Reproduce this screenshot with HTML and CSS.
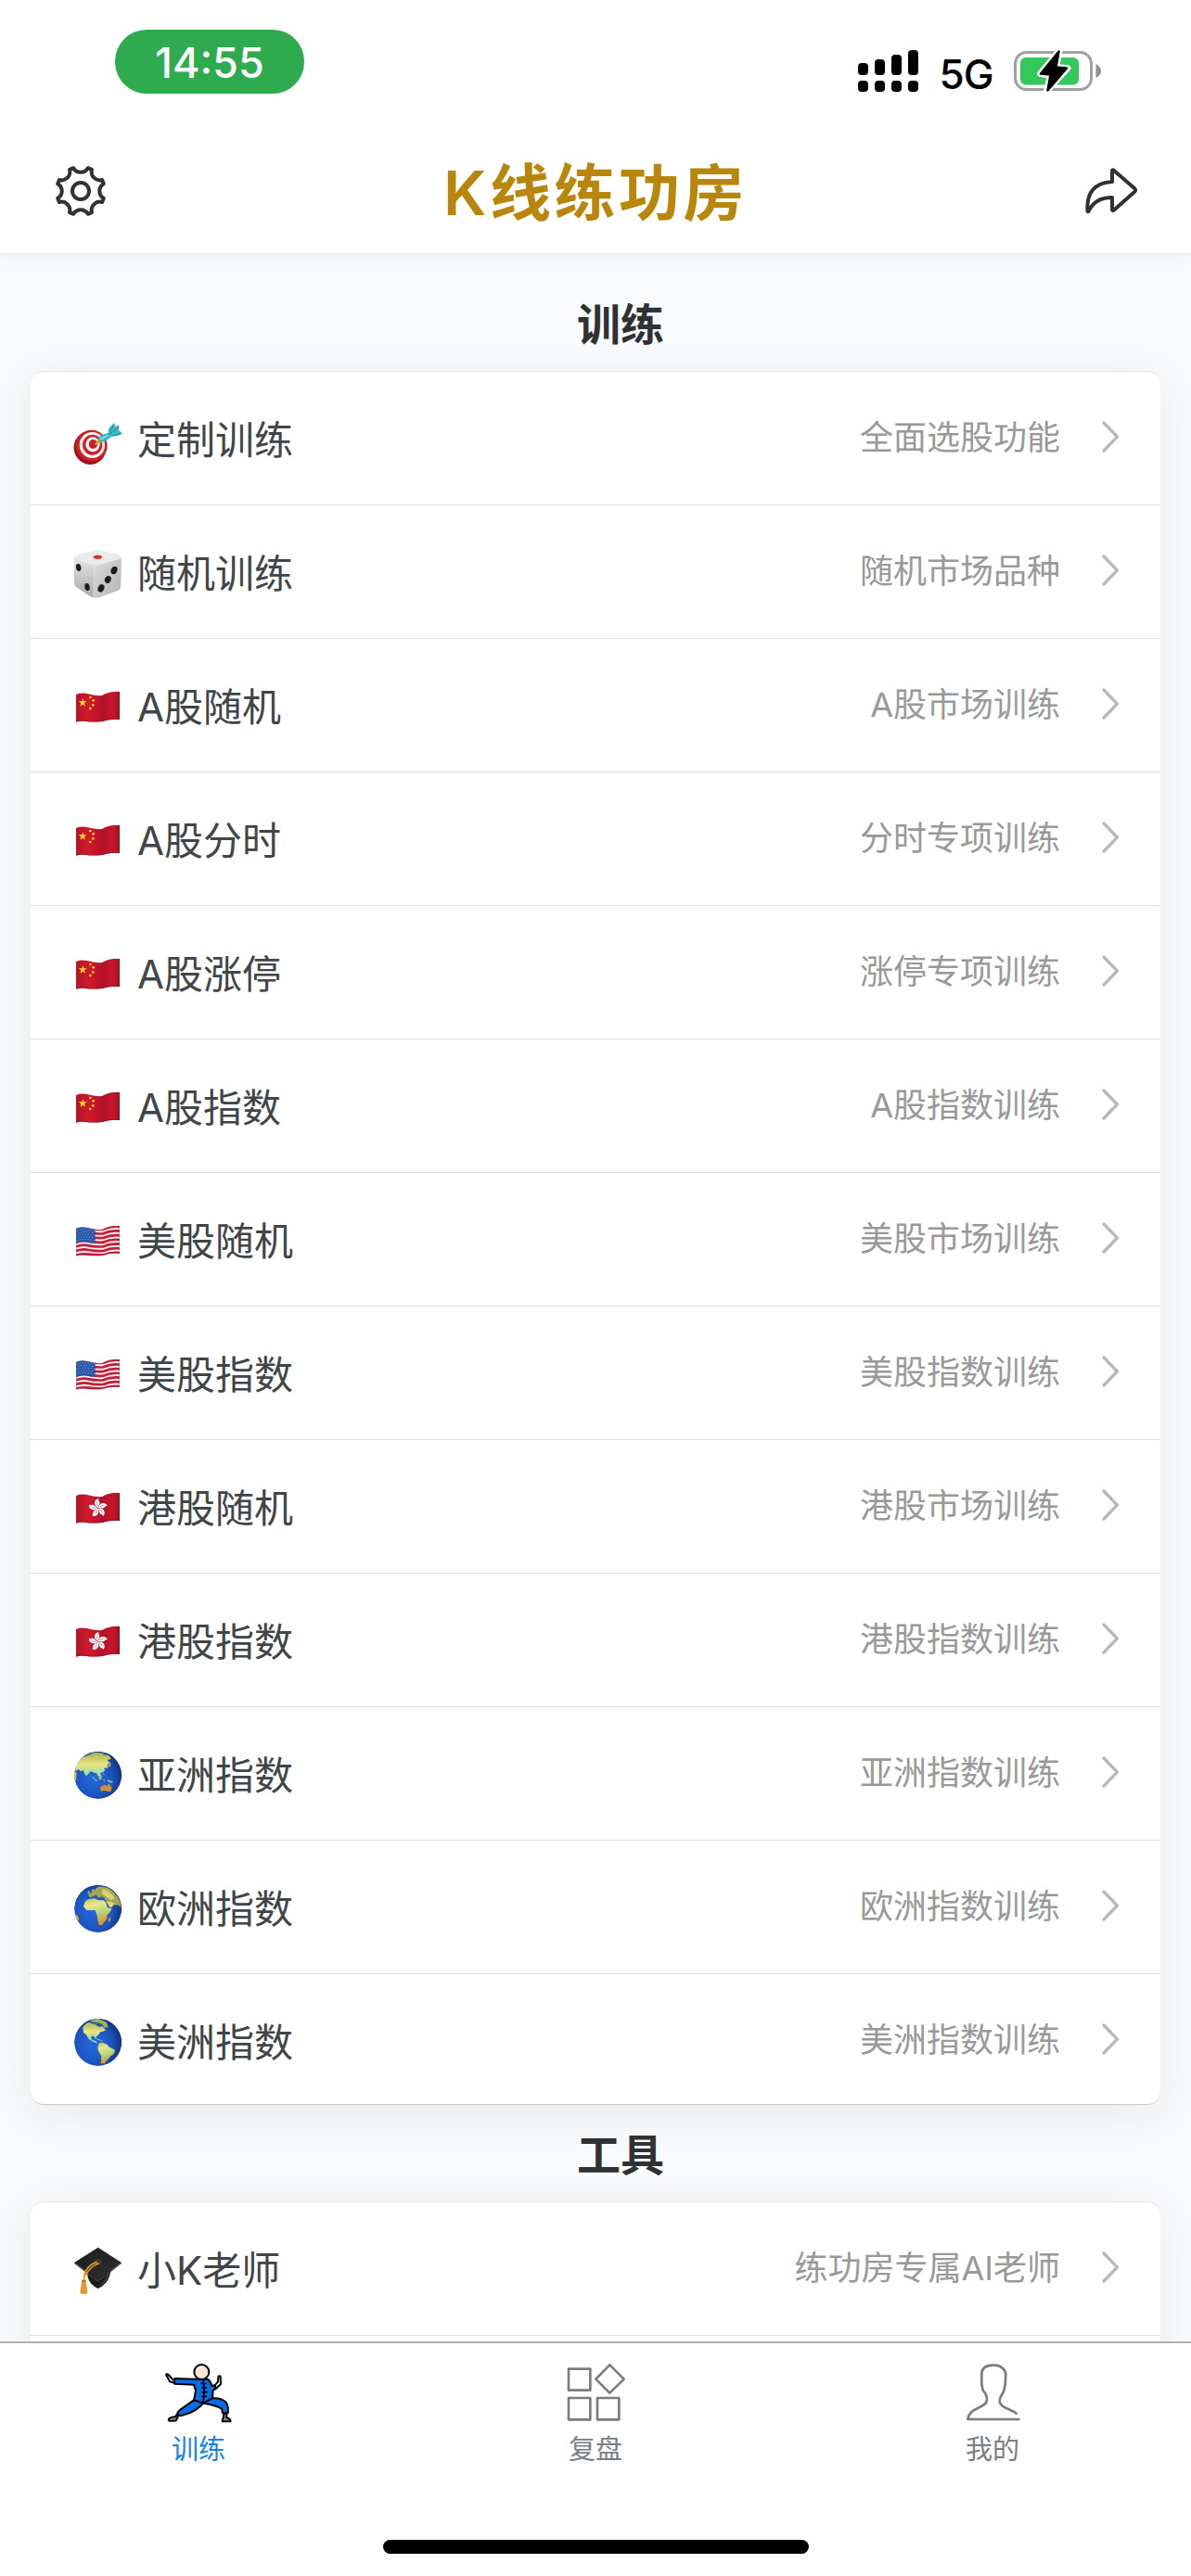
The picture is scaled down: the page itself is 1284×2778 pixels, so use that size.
FILE: index.html
```
<!DOCTYPE html>
<html lang="zh-CN">
<head>
    <meta charset="UTF-8">
    <meta name="viewport" content="width=device-width, initial-scale=1.0">
    <title>K线练功房</title>
    <link rel="stylesheet" href="styles.css">
</head>
<body>
    <!-- Shared icons -->
    <svg class="sprite" width="0" height="0" aria-hidden="true">
        <defs>
            <linearGradient id="diceLeft" x1="0" y1="0" x2="0" y2="1">
                <stop offset="0" stop-color="#e4e4e4"/>
                <stop offset="1" stop-color="#a9a9a9"/>
            </linearGradient>
            <linearGradient id="diceRight" x1="0" y1="0" x2="1" y2="1">
                <stop offset="0" stop-color="#dcdcdc"/>
                <stop offset="1" stop-color="#b4b4b4"/>
            </linearGradient>
            <linearGradient id="flagRed" x1="0" y1="0" x2="1" y2="0">
                <stop offset="0" stop-color="#b41526"/>
                <stop offset="0.3" stop-color="#d0182c"/>
                <stop offset="0.6" stop-color="#b31229"/>
                <stop offset="0.85" stop-color="#c8162b"/>
                <stop offset="1" stop-color="#9c1222"/>
            </linearGradient>
            <radialGradient id="sea" cx="0.4" cy="0.55" r="0.62">
                <stop offset="0" stop-color="#2468dc"/>
                <stop offset="0.65" stop-color="#1c53c0"/>
                <stop offset="1" stop-color="#123178"/>
            </radialGradient>
            <linearGradient id="land" x1="0" y1="0" x2="0.3" y2="1">
                <stop offset="0" stop-color="#b9c248"/>
                <stop offset="0.3" stop-color="#ece48a"/>
                <stop offset="0.6" stop-color="#b5dc84"/>
                <stop offset="1" stop-color="#d9972c"/>
            </linearGradient>
            <linearGradient id="asiaLand" x1="0" y1="0" x2="0" y2="1">
                <stop offset="0" stop-color="#a9b545"/>
                <stop offset="0.45" stop-color="#ebe282"/>
                <stop offset="0.7" stop-color="#b4e0a0"/>
                <stop offset="1" stop-color="#9adcb4"/>
            </linearGradient>
            <linearGradient id="board" x1="0" y1="0" x2="1" y2="1">
                <stop offset="0" stop-color="#1c1c1c"/>
                <stop offset="0.7" stop-color="#2a2a2a"/>
                <stop offset="1" stop-color="#0c0c0c"/>
            </linearGradient>
            <clipPath id="globeClip"><circle cx="77" cy="77" r="77"/></clipPath>
            <clipPath id="flagClip"><path d="M0 12Q16 5 36 9Q60 17 84 15Q112 0 141 3V93Q112 90 84 99Q52 103 30 98Q14 96 0 101Z"/></clipPath>
        </defs>

        <symbol id="i-target" viewBox="174 174 162 162">
            <ellipse cx="231" cy="279" rx="52" ry="54" fill="#96121a" transform="rotate(-20 231 279)"/>
            <ellipse cx="236" cy="272" rx="51" ry="51" fill="#cf1d26"/>
            <ellipse cx="238" cy="270" rx="41" ry="42" fill="#fbf5f4"/>
            <ellipse cx="239" cy="269" rx="32" ry="33" fill="#cb1f29"/>
            <ellipse cx="240" cy="268" rx="23" ry="24" fill="#fbf5f4"/>
            <ellipse cx="241" cy="267" rx="14" ry="15" fill="#c71e27"/>
            <path d="M244 270L258 250L270 262Z" fill="#d9a51f"/>
            <path d="M258 247Q278 230 292 232L300 242Q288 254 266 262Q258 256 258 247Z" fill="#34b5c6"/>
            <path d="M288 236L293 214L310 197L312 210L325 205L324 222L336 232L322 239L298 243Z" fill="#3dbac8"/>
            <path d="M290 237L324 212M294 226L310 204M302 240L332 233" fill="none" stroke="#1b8796" stroke-width="3"/>
            <path d="M264 252L290 238" stroke="#8be3ec" stroke-width="5"/>
        </symbol>

        <symbol id="i-dice" viewBox="174 606 162 162">
            <path d="M179 641Q179 632 192 626L244 612Q258 609 272 613L320 624Q333 629 333 642L330 728Q329 737 318 742L262 762Q249 766 238 762L192 733Q181 727 180 718Z" fill="#dedede"/>
            <path d="M180 638Q190 640 226 655Q242 661 243 676L241 762Q236 763 230 758L192 733Q181 727 180 718Z" fill="url(#diceLeft)"/>
            <path d="M333 638Q320 640 272 655Q246 661 245 680L243 763Q252 765 262 762L318 742Q329 737 330 728Z" fill="url(#diceRight)"/>
            <path d="M181 637Q184 629 200 624L244 612Q258 609 272 613L320 624Q330 628 331 637Q300 646 270 654Q245 662 226 654Z" fill="#ebebeb"/>
            <ellipse cx="256" cy="632" rx="14" ry="6" fill="#e02a26"/>
            <g fill="#1d1d1d">
                <ellipse cx="194" cy="666" rx="8" ry="12" transform="rotate(-12 194 666)"/>
                <ellipse cx="222" cy="729" rx="8" ry="12" transform="rotate(-12 222 729)"/>
                <ellipse cx="309" cy="675" rx="10" ry="13" transform="rotate(25 309 675)"/>
                <ellipse cx="289" cy="705" rx="10" ry="12" transform="rotate(25 289 705)"/>
                <ellipse cx="267" cy="733" rx="10" ry="13" transform="rotate(25 267 733)"/>
            </g>
        </symbol>

        <symbol id="i-cn" viewBox="-12 -27 162 162">
            <g clip-path="url(#flagClip)">
                <rect width="141" height="104" fill="url(#flagRed)"/>
                <path d="M0 101Q14 96 30 98Q52 103 84 99Q112 90 141 93V3" fill="none" stroke="#7e1520" stroke-width="4"/>
                <g fill="#fbdc22">
                    <path d="M22 24L25 34L35 34L27 40L30 50L22 44L13 50L16 40L8 34L19 34Z"/>
                    <circle cx="46" cy="21" r="4"/>
                    <circle cx="56" cy="31" r="4"/>
                    <circle cx="55" cy="46" r="4"/>
                    <circle cx="46" cy="57" r="4"/>
                </g>
            </g>
        </symbol>

        <symbol id="i-us" viewBox="-12 -27 162 162">
            <g clip-path="url(#flagClip)">
                <rect width="141" height="104" fill="#f3f0f1"/>
                <g fill="none" stroke="#c81c36" stroke-width="8">
                    <path d="M0 14Q20 6 42 11T88 14Q112 3 141 6"/>
                    <path d="M0 28Q20 20 42 25T88 28Q112 17 141 20"/>
                    <path d="M0 42Q20 34 42 39T88 42Q112 31 141 34"/>
                    <path d="M0 56Q20 48 42 53T88 56Q112 45 141 48"/>
                    <path d="M0 70Q20 62 42 67T88 70Q112 59 141 62"/>
                    <path d="M0 84Q20 76 42 81T88 84Q112 73 141 76"/>
                    <path d="M0 98Q20 92 42 95T88 97Q112 87 141 90"/>
                </g>
                <path d="M0 0H62V58Q50 60 38 56Q18 52 0 60Z" fill="#2456a8"/>
                <g fill="none" stroke="#a8c0e6" stroke-width="3" stroke-dasharray="3 6">
                    <path d="M4 19Q20 10 60 18"/>
                    <path d="M8 27Q22 18 60 26"/>
                    <path d="M4 35Q20 26 60 34"/>
                    <path d="M8 43Q22 34 60 42"/>
                    <path d="M4 51Q20 42 60 50"/>
                </g>
                <path d="M0 101Q14 96 30 98Q52 103 84 99Q112 90 141 93V3M0 12V101" fill="none" stroke="#6d5560" stroke-opacity="0.6" stroke-width="3"/>
            </g>
        </symbol>

        <symbol id="i-hk" viewBox="-12 -27 162 162">
            <g clip-path="url(#flagClip)">
                <rect width="141" height="104" fill="url(#flagRed)"/>
                <path d="M0 101Q14 96 30 98Q52 103 84 99Q112 90 141 93V3" fill="none" stroke="#7e1520" stroke-width="4"/>
                <!-- Bauhinia, five rotated petals -->
                <g transform="translate(71 52)">
                    <path id="petal" d="M0 -1C-6 -5 -14 -12 -10 -21C-8 -27 -4 -30 3 -31C-1 -26 4 -24 5 -18C6 -11 1 -9 0 -1Z" fill="#fff"/>
                    <use href="#petal" transform="rotate(72)"/>
                    <use href="#petal" transform="rotate(144)"/>
                    <use href="#petal" transform="rotate(216)"/>
                    <use href="#petal" transform="rotate(288)"/>
                    <g fill="none" stroke="#d3182c" stroke-width="1.6">
                        <path id="vein" d="M-1 -7Q-5 -12 -3 -19"/>
                        <use href="#vein" transform="rotate(72)"/>
                        <use href="#vein" transform="rotate(144)"/>
                        <use href="#vein" transform="rotate(216)"/>
                        <use href="#vein" transform="rotate(288)"/>
                    </g>
                </g>
            </g>
        </symbol>

        <symbol id="i-asia" viewBox="-6 -2 162 162">
            <g clip-path="url(#globeClip)">
                <circle cx="77" cy="77" r="77" fill="url(#sea)"/>
                <path d="M2 54Q16 20 52 8Q84 -2 112 14L120 24L108 28L114 38L106 46L108 54L96 54L100 62L92 68L84 70L88 82L82 80L84 88L76 78L72 70L66 70L54 64L46 72L40 80L34 74L30 62L20 64L14 58L6 64Z" fill="url(#asiaLand)"/>
                <path d="M24 12L50 4L58 10L34 18ZM90 4L108 12L96 14Z" fill="#4c78a0"/>
                <path d="M0 60L8 70L6 92L0 98Z" fill="#d8bb3c"/>
                <path d="M116 32L119 46L108 52L104 48L113 44Z" fill="#b9b553"/>
                <path d="M60 82L76 96L72 98L58 84ZM80 82L90 78L88 92L80 92ZM76 99L92 101M94 88L100 92L96 98ZM108 92L126 98L120 102L106 96ZM94 66L98 78L94 75Z" fill="#8ac58a"/>
                <path d="M84 116L98 108L106 112L112 104L122 118L118 130L106 130L98 126L86 130Z" fill="#cf9134"/>
            </g>
        </symbol>

        <symbol id="i-europe" viewBox="-6 -2 162 162">
            <g clip-path="url(#globeClip)">
                <circle cx="77" cy="77" r="77" fill="url(#sea)"/>
                <path d="M46 36L48 28L56 26L58 12L66 16L76 6Q110 2 128 24Q150 46 152 74L140 64L132 66L122 58L114 62L108 52L98 50L100 44L88 38L80 42L70 32L62 38L52 40Z" fill="#a6a650"/>
                <path d="M92 14Q116 18 132 44L118 48L100 36L90 28Z" fill="#dcd27a"/>
                <path d="M34 56Q38 48 48 46L66 44L78 50L94 50L102 56L108 74L122 76Q116 92 106 98L106 110L96 122L90 130L80 130L76 114L74 100L68 82L54 82L40 82L30 70Z" fill="url(#land)"/>
                <path d="M100 52L108 58L118 72L112 74Z" fill="#2059c3"/>
                <path d="M102 52L116 54L130 60L124 70L116 74Z" fill="#e3d67c"/>
                <path d="M112 108L118 104L116 118L110 120ZM0 94L10 98L16 110L8 124L0 110Z" fill="#cfa434"/>
                <path d="M44 22L50 18L50 28L44 30Z" fill="#a8bd54"/>
            </g>
        </symbol>

        <symbol id="i-america" viewBox="-6 -2 162 162">
            <g clip-path="url(#globeClip)">
                <circle cx="77" cy="77" r="77" fill="url(#sea)"/>
                <path d="M28 30Q34 16 48 12L60 18L74 16L82 26L90 24L102 38L94 42L84 44L80 52L72 58L70 64L60 56L54 62L58 70L70 74L76 80L70 80L58 74L46 66L40 54L30 46Z" fill="url(#asiaLand)"/>
                <path d="M50 8L76 0L104 12L110 28L98 30L90 18L76 14L62 12Z" fill="#9cb552"/>
                <path d="M64 16L84 18L88 28L76 26Z" fill="#2059b4"/>
                <path d="M80 80L92 78L106 84L112 92L132 102Q130 116 118 122L106 136L98 146L86 146L88 122L78 106L76 94Z" fill="url(#land)"/>
                <path d="M66 64L84 70L92 74" fill="none" stroke="#8ac58a" stroke-width="3"/>
            </g>
        </symbol>

        <symbol id="i-cap" viewBox="54 66 162 162">
            <path d="M101 145L104 168Q112 194 137 204Q166 190 174 164L181 140Z" fill="#1b1b1b"/>
            <path d="M146 192Q164 180 172 152" fill="none" stroke="#3d3d3d" stroke-width="5"/>
            <path d="M137 71L213 120L137 178L60 120Z" fill="url(#board)"/>
            <path d="M60 120L137 178L213 120V123L137 182L60 123Z" fill="#404040"/>
            <ellipse cx="137" cy="118" rx="13" ry="9" fill="#3b3b3e"/>
            <path d="M134 118Q104 126 92 160V180M140 122Q112 132 94 164" fill="none" stroke="#e09a26" stroke-width="5"/>
            <path d="M85 176H97L103 216Q103 222 91 222Q79 222 79 216Z" fill="#e39c28"/>
            <path d="M85 176H97V182H84Z" fill="#b97415"/>
        </symbol>

        <symbol id="i-arrow" viewBox="0 0 18 34">
            <path d="M2 2L16.500 17L2 32" fill="none" stroke="#b8b8b8" stroke-width="3.300" stroke-linecap="round"/>
        </symbol>
    </svg>

    <div class="app">
        <div class="status-bar">
            <div class="time">14:55</div>
            <div class="status-icons">
                <svg class="signal" width="66" height="46" viewBox="925 53 66 46">
                    <rect x="925" y="67" width="11" height="13" rx="4"/>
                    <rect x="943" y="63" width="11" height="17" rx="4"/>
                    <rect x="961" y="58" width="11" height="22" rx="4"/>
                    <rect x="979" y="53" width="11" height="27" rx="4"/>
                    <rect x="925" y="86" width="11" height="12" rx="4"/>
                    <rect x="943" y="86" width="11" height="12" rx="4"/>
                    <rect x="961" y="86" width="11" height="12" rx="4"/>
                    <rect x="979" y="86" width="11" height="12" rx="4"/>
                </svg>
                <span class="network">5G</span>
                <svg class="battery" width="96" height="48" viewBox="1092 52 96 48">
                    <rect x="1094.500" y="55.500" width="82" height="40" rx="12" fill="none" stroke="#a0a0a0" stroke-width="3"/>
                    <path d="M1181.500 68Q1187 71 1187 76Q1187 80 1181.500 83Z" fill="#8f8f8f"/>
                    <rect x="1100" y="61" width="63" height="29.500" rx="6" fill="#34c759"/>
                    <path d="M1142 54L1121.500 78.500L1132.500 80L1128.500 97L1151 72.500L1138.500 71.500Z" stroke="#fff" stroke-width="7" stroke-linejoin="round" fill="#fff"/>
                    <path d="M1141.500 54.500L1122 78.500L1132.500 79.500L1129.500 96.500L1150 72.500L1138.500 71.500Z" stroke="#000" stroke-width="2.500" stroke-linejoin="round"/>
                </svg>
            </div>
        </div>

        <header class="nav">
            <svg class="gear" width="56" height="56" viewBox="-28 -28 56 56">
                <path d="M-7.800 -24.800A9 9 0 0 0 7.800 -24.800L12 -23.100A9 9 0 0 0 23.100 -12L24.800 -7.800A9 9 0 0 0 24.800 7.800L23.100 12A9 9 0 0 0 12 23.100L7.800 24.800A9 9 0 0 0 -7.800 24.800L-12 23.100A9 9 0 0 0 -23.100 12L-24.800 7.800A9 9 0 0 0 -24.800 -7.800L-23.100 -12A9 9 0 0 0 -12 -23.100Z"/>
                <circle r="9"/>
            </svg>
            <h1>K线练功房</h1>
            <svg class="share" width="58" height="50" viewBox="1170 180 58 50">
                <path d="M1173.500 226.500C1172 207 1181 196 1200 195V183Q1200.500 181.500 1202 183L1224 202Q1226 204 1224 206L1202 225.500Q1200 227 1200 225V212C1188 212 1180 216 1175 226Q1174 228 1173.500 226.500Z"/>
            </svg>
        </header>

        <main class="content">
            <h2>训练</h2>
            <ul class="card">
                <li><svg class="icon"><use href="#i-target"/></svg><span class="name">定制训练</span><span class="desc">全面选股功能</span><svg class="arrow"><use href="#i-arrow"/></svg></li>
                <li><svg class="icon"><use href="#i-dice"/></svg><span class="name">随机训练</span><span class="desc">随机市场品种</span><svg class="arrow"><use href="#i-arrow"/></svg></li>
                <li><svg class="icon"><use href="#i-cn"/></svg><span class="name">A股随机</span><span class="desc">A股市场训练</span><svg class="arrow"><use href="#i-arrow"/></svg></li>
                <li><svg class="icon"><use href="#i-cn"/></svg><span class="name">A股分时</span><span class="desc">分时专项训练</span><svg class="arrow"><use href="#i-arrow"/></svg></li>
                <li><svg class="icon"><use href="#i-cn"/></svg><span class="name">A股涨停</span><span class="desc">涨停专项训练</span><svg class="arrow"><use href="#i-arrow"/></svg></li>
                <li><svg class="icon"><use href="#i-cn"/></svg><span class="name">A股指数</span><span class="desc">A股指数训练</span><svg class="arrow"><use href="#i-arrow"/></svg></li>
                <li><svg class="icon"><use href="#i-us"/></svg><span class="name">美股随机</span><span class="desc">美股市场训练</span><svg class="arrow"><use href="#i-arrow"/></svg></li>
                <li><svg class="icon"><use href="#i-us"/></svg><span class="name">美股指数</span><span class="desc">美股指数训练</span><svg class="arrow"><use href="#i-arrow"/></svg></li>
                <li><svg class="icon"><use href="#i-hk"/></svg><span class="name">港股随机</span><span class="desc">港股市场训练</span><svg class="arrow"><use href="#i-arrow"/></svg></li>
                <li><svg class="icon"><use href="#i-hk"/></svg><span class="name">港股指数</span><span class="desc">港股指数训练</span><svg class="arrow"><use href="#i-arrow"/></svg></li>
                <li><svg class="icon"><use href="#i-asia"/></svg><span class="name">亚洲指数</span><span class="desc">亚洲指数训练</span><svg class="arrow"><use href="#i-arrow"/></svg></li>
                <li><svg class="icon"><use href="#i-europe"/></svg><span class="name">欧洲指数</span><span class="desc">欧洲指数训练</span><svg class="arrow"><use href="#i-arrow"/></svg></li>
                <li><svg class="icon"><use href="#i-america"/></svg><span class="name">美洲指数</span><span class="desc">美洲指数训练</span><svg class="arrow"><use href="#i-arrow"/></svg></li>
            </ul>

            <h2>工具</h2>
            <ul class="card card-open">
                <li><svg class="icon"><use href="#i-cap"/></svg><span class="name">小K老师</span><span class="desc">练功房专属AI老师</span><svg class="arrow"><use href="#i-arrow"/></svg></li>
            </ul>
        </main>

        <nav class="tab-bar">
            <div class="tab active">
                <svg width="74" height="66" viewBox="82 115 222 198" stroke="#000" stroke-width="6" stroke-linejoin="round" stroke-linecap="round">
                    <path d="M181 168L116 166L115 183L178 186L184 206L178 236L208 246L238 232L240 204L248 200L246 188L236 190Q232 174 222 168Z" fill="#0a6ce8"/>
                    <path d="M178 236L135 266Q122 276 126 284Q132 290 150 282Q188 272 208 246Z" fill="#0a6ce8"/>
                    <path d="M208 246L238 230Q270 228 284 246Q290 256 288 278H271L268 264Q250 252 208 246Z" fill="#0a6ce8"/>
                    <circle cx="203" cy="145" r="24" fill="#fbe3d6"/>
                    <path d="M114 180L100 176Q94 164 88 154Q90 150 96 154L110 170" fill="#fff"/>
                    <path d="M246 188L256 176L257 160Q261 156 264 160L265 184L250 198Z" fill="#fff"/>
                    <path d="M124 281L118 290Q96 292 96 300Q98 306 120 302L126 292Z" fill="#8b8b8b"/>
                    <path d="M274 280V292Q268 300 270 305H296Q300 298 284 292V280Z" fill="#8b8b8b"/>
                    <path d="M208 172L212 206L208 244M202 182H216M204 196H219M206 210H220M204 224H218" fill="none" stroke-width="5"/>
                </svg>
                <span>训练</span>
            </div>
            <div class="tab">
                <svg width="74" height="66" viewBox="76 115 222 198" fill="none" stroke="#7c7c7c" stroke-width="8" stroke-linejoin="round">
                    <rect x="100" y="135" width="70" height="69"/>
                    <rect x="100" y="229" width="70" height="70"/>
                    <rect x="193" y="229" width="70" height="70"/>
                    <path d="M233 122L279 168L233 213L188 168Z"/>
                </svg>
                <span>复盘</span>
            </div>
            <div class="tab">
                <svg width="74" height="66" viewBox="70 115 222 198" fill="none" stroke="#7c7c7c" stroke-width="8" stroke-linejoin="round" stroke-linecap="round">
                    <path d="M258 279C240 264 206 262 204 240C202 226 212 222 218 206L222 186L224 152Q222 138 212 132Q204 122 182 123Q146 124 146 152V184L150 204Q164 220 163 236C162 262 106 258 101 298H266"/>
                </svg>
                <span>我的</span>
            </div>
        </nav>
        <div class="home-area"><div class="home-indicator"></div></div>
    </div>
</body>
</html>
```

FILE: styles.css
```
* {
    box-sizing: border-box;
}

body {
    margin: 0;
    background-color: #fff;
    color: #424547;
    font-family: Inter, "Noto Sans CJK SC", sans-serif;
}

.sprite {
    display: block;
}

.app {
    display: flex;
    flex-direction: column;
    width: 1284px;
    height: 2778px;
    overflow: hidden;
}

/* Status bar */
.status-bar {
    position: relative;
    z-index: 2;
    display: flex;
    justify-content: space-between;
    align-items: flex-start;
    height: 140px;
    padding: 32px 96px 0 124px;
    background-color: #fff;
}

.time {
    width: 204px;
    height: 69px;
    border-radius: 34px;
    background-color: #2fab4f;
    color: #fff;
    font-size: 45px;
    font-weight: 500;
    line-height: 71px;
    text-align: center;
}

.status-icons {
    display: flex;
    align-items: center;
    padding-top: 20px;
}

.network {
    width: 101px;
    padding-top: 6px;
    color: #000;
    font-size: 44px;
    font-weight: 500;
    letter-spacing: -1px;
    line-height: 44px;
    text-align: center;
}

/* Header */
.nav {
    position: relative;
    z-index: 1;
    display: flex;
    justify-content: space-between;
    align-items: center;
    height: 133px;
    padding: 0 57px 0 59px;
    background-color: #fff;
    box-shadow: 0 1px 2px rgba(0, 0, 0, 0.05), 0 4px 24px rgba(0, 0, 0, 0.04);
}

.nav svg {
    margin-bottom: 2px;
    fill: none;
    stroke: #303133;
    stroke-width: 4px;
    stroke-linejoin: round;
}

h1 {
    margin: 0;
    padding-top: 3px;
    color: #b8860b;
    font-size: 66px;
    font-weight: 600;
    letter-spacing: 3.5px;
    line-height: 80px;
}

/* List */
.content {
    flex: 1;
    min-height: 0;
    overflow: hidden;
    padding: 23px 33px 0;
    background-color: #f9fafc;
}

h2 {
    height: 104px;
    margin: 0;
    padding-left: 54px;
    color: #303133;
    font-size: 47px;
    font-weight: 700;
    line-height: 107px;
    text-align: center;
}

.card {
    margin: 0;
    padding: 0;
    list-style: none;
    height: 1870px;
    border-top: 1px solid #e4e5e7;
    border-bottom: 1px solid #c9caca;
    border-radius: 14px;
    background-color: #fff;
    box-shadow: 0 10px 50px rgba(0, 0, 0, 0.07);
}

.card-open {
    height: 300px;
}

.card li {
    display: flex;
    align-items: center;
    height: 144px;
    padding: 0 45px;
    border-bottom: 1px solid #dedfe0;
}

.card li:nth-child(13) {
    border-bottom-color: transparent;
}

.icon {
    width: 54px;
    height: 54px;
    margin-top: 5px;
}

.name {
    flex: 1;
    padding: 4px 0 0 16px;
    font-size: 42px;
    line-height: 60px;
}

.desc {
    margin-bottom: 2px;
    color: #999;
    font-size: 36px;
    line-height: 50px;
}

.arrow {
    width: 18px;
    height: 34px;
    margin: 0 0 3px 45px;
}

/* Bottom tabs */
.tab-bar {
    display: flex;
    height: 154px;
    border-top: 2px solid #b0b0b0;
    background-color: #fff;
}

.tab {
    flex: 1;
    display: flex;
    flex-direction: column;
    align-items: center;
    padding-top: 21px;
    color: #7a7e83;
    font-size: 29px;
    line-height: 56px;
}

.tab.active {
    color: #1482ee;
}

.home-area {
    height: 99px;
    padding-top: 60px;
}

.home-indicator {
    width: 459px;
    height: 15px;
    margin: 0 auto;
    border-radius: 8px;
    background-color: #000;
}
```
